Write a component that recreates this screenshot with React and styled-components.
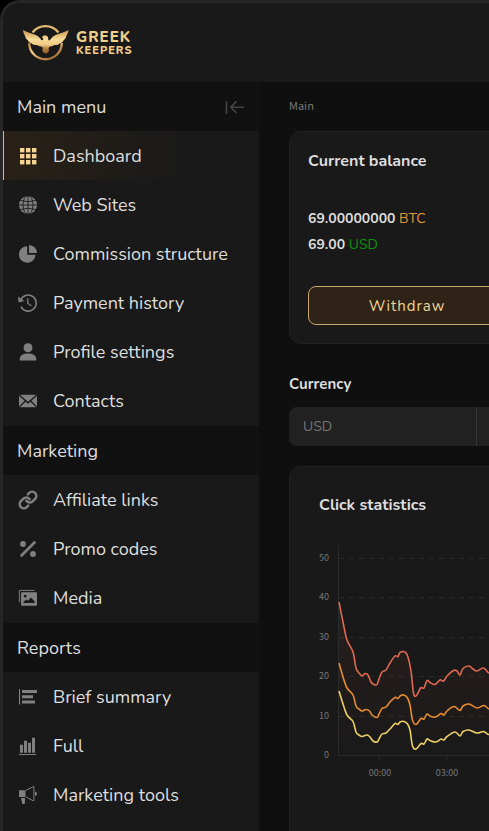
import React from "react";
import styled, { createGlobalStyle } from "styled-components";
import { Link as ChainIcon } from "lucide-react";

const GlobalStyle = createGlobalStyle`
  *, *::before, *::after { box-sizing: border-box; }
  body {
    margin: 0;
    background: #000;
    color: #dedede;
    font-family: Nunito, Lato, "Noto Sans", sans-serif;
    overflow: hidden;
  }
  button, select { font: inherit; color: inherit; }
`;

const labelFont = `"Noto Sans CJK SC", "Noto Sans", sans-serif`;

const Frame = styled.div`
  display: flex;
  flex-direction: column;
  height: 100vh;
  border-top: 3px solid #262626;
  border-left: 3px solid #262626;
  border-top-left-radius: 20px;
  background: #0f0f0f;
  overflow: hidden;
`;

const Header = styled.header`
  display: flex;
  align-items: center;
  flex: none;
  height: 79px;
  padding: 0 19px;
  background: #191919;
`;

const Brand = styled.a`
  display: flex;
  align-items: center;
  gap: 6px;
  color: #f0d08c;
  text-decoration: none;
`;

const BrandText = styled.span`
  display: flex;
  flex-direction: column;
  padding-top: 3px;
  font-weight: 800;
  line-height: 14px;
  letter-spacing: 1px;
`;

const BrandName = styled.span`
  font-size: 15px;
`;

const BrandSub = styled.span`
  font-size: 11px;
`;

const Body = styled.div`
  display: flex;
  flex: 1;
  min-height: 0;
`;

const Sidebar = styled.nav`
  flex: none;
  width: 256px;
  background: #191919;
  overflow: hidden;
`;

const SectionHeading = styled.div`
  display: flex;
  align-items: center;
  justify-content: space-between;
  height: 49px;
  padding: 0 14px;
  background: #111;
`;

const SectionTitle = styled.h2`
  margin: 0;
  font-size: 18px;
  line-height: 24px;
  font-weight: 400;
`;

const CollapseButton = styled.button`
  display: flex;
  padding: 0;
  border: 0;
  background: none;
  color: #444;
`;

const MenuList = styled.ul`
  margin: 0;
  padding: 0 0 1px;
  list-style: none;
`;

const MenuLink = styled.a`
  display: flex;
  align-items: center;
  gap: 15px;
  height: 49px;
  padding-left: 14px;
  border-left: 1px solid ${(p) => (p.$active ? "#dcb873" : "transparent")};
  background: ${(p) => (p.$active ? "linear-gradient(90deg, #292117, #191919 70%)" : "none")};
  color: #dedede;
  font-size: 18px;
  line-height: 24px;
  text-decoration: none;

  svg {
    flex: none;
    width: 20px;
    height: 20px;
    color: ${(p) => (p.$active ? "#f7d491" : "#808080")};
  }
`;

const Main = styled.main`
  flex: 1;
  min-width: 0;
  padding: 0 30px;
  overflow: hidden;
`;

const Content = styled.div`
  display: flex;
  flex-direction: column;
  min-width: 236px;
`;

const Breadcrumb = styled.div`
  height: 49px;
  color: #777;
  font-family: ${labelFont};
  font-size: 11px;
  line-height: 46px;
`;

const Card = styled.section`
  border: 1px solid #222;
  border-radius: 12px;
  background: #191919;
`;

const BalanceCard = styled(Card)`
  display: flex;
  flex-direction: column;
  width: 236px;
  height: 213px;
  padding: 17px 18px 18px;
`;

const Title = styled.h3`
  margin: 0;
  font-size: 16px;
  line-height: 24px;
  font-weight: 700;
`;

const Amounts = styled.div`
  margin-top: 33px;
  font-size: 14px;
  line-height: 26px;
`;

const Amount = styled.div`
  b { font-weight: 700; }
  span { color: ${(p) => p.$tone}; }
`;

const WithdrawButton = styled.button`
  height: 39px;
  margin-top: 28px;
  border: 1px solid #c8a76a;
  border-radius: 8px;
  background: #2f2317;
  color: #f0d394;
  font-size: 15px;
  letter-spacing: 1px;
`;

const FieldLabel = styled.label`
  margin-top: 28px;
  font-size: 15px;
  line-height: 24px;
  font-weight: 700;
`;

const Field = styled.div`
  display: flex;
  height: 39px;
  margin-top: 11px;
  border-radius: 8px;
  background: #212121;
  overflow: hidden;
`;

const CurrencySelect = styled.select`
  appearance: none;
  width: 188px;
  padding: 0 14px;
  border: 0;
  border-right: 1px solid #363636;
  background: transparent;
  color: #747474;
  font-size: 14px;
`;

const StatsCard = styled(Card)`
  margin-top: 20px;
  padding: 26px 29px 80px;
`;

const Chart = styled.svg`
  display: block;
  width: 100%;
  height: 240px;
  margin-top: 23px;
  overflow: visible;

  text {
    fill: #777;
    font-family: ${labelFont};
    font-size: 9px;
  }
`;

const GridIcon = () => (
  <svg viewBox="0 0 20 20" fill="currentColor">
    {[2, 8, 14].map((y) => [2, 8, 14].map((x) => (
      <rect key={`${x}-${y}`} x={x} y={y} width="4.4" height="4.4" />
    )))}
  </svg>
);

const GlobeIcon = () => (
  <svg viewBox="0 0 20 20" fill="none">
    <circle cx="10" cy="10" r="9" fill="currentColor" />
    <g stroke="#191919" strokeWidth="0.9">
      <path d="M10 1v18M1 10h18M2.5 5.5Q10 8 17.5 5.5M2.5 14.5Q10 12 17.5 14.5" />
      <ellipse cx="10" cy="10" rx="5" ry="9.4" />
    </g>
  </svg>
);

const PieIcon = () => (
  <svg viewBox="0 0 20 20" fill="currentColor">
    <path d="M9.2 2.2v8.6h8.3A8.3 8.3 0 1 1 9.2 2.2Z" />
    <path d="M11 .9a8.2 8.2 0 0 1 8 8.1h-8Z" />
  </svg>
);

const HistoryIcon = () => (
  <svg viewBox="0 0 20 20" fill="none" stroke="currentColor">
    <path d="M3.1 6.4A8 8 0 1 1 3 13.6" strokeWidth="1.5" />
    <path d="M0 3.5.6 9.4 6.3 8Z" fill="currentColor" stroke="none" />
    <path d="M9.8 5.4v5.1l3.7 2.2" strokeWidth="1.3" />
  </svg>
);

const PersonIcon = () => (
  <svg viewBox="0 0 20 20" fill="currentColor">
    <circle cx="10" cy="5.8" r="4.5" />
    <path d="M1.8 18.5v-1.7c0-3.5 3.9-5.2 8.2-5.2s8.2 1.7 8.2 5.2v1.7Z" />
  </svg>
);

const MailIcon = () => (
  <svg viewBox="0 0 20 20" fill="currentColor">
    <path d="M1.8 3.7h16.4L10 10.8Z" />
    <path d="M1 4.8 6.6 9.8 1 15.4ZM19 4.8 13.4 9.8 19 15.4Z" />
    <path d="m7.6 10.8 2.4 2 2.4-2 5.8 5.5H1.8Z" />
  </svg>
);

const LinkIcon = () => <ChainIcon strokeWidth={3} />;

const PercentIcon = () => (
  <svg viewBox="0 0 20 20" fill="currentColor">
    <circle cx="5" cy="5" r="2.9" />
    <circle cx="15" cy="15" r="2.9" />
    <path d="M3.5 16.5 16.5 3.5" stroke="currentColor" strokeWidth="2.6" strokeLinecap="round" />
  </svg>
);

const MediaIcon = () => (
  <svg viewBox="0 0 20 20" fill="currentColor">
    <path d="M16.5 2.4H1.4V14" fill="none" stroke="currentColor" strokeWidth="1" />
    <path fillRule="evenodd" d="M4 4.3h14a1 1 0 0 1 1 1v11.4a1 1 0 0 1-1 1H4a1 1 0 0 1-1-1V5.3a1 1 0 0 1 1-1ZM5.5 15h11v-1.8l-3.6-3.7-3 3.2-1.5-1.2-2.9 2.2ZM7.2 6.8a1.4 1.4 0 1 0 0 2.8 1.4 1.4 0 0 0 0-2.8Z" />
  </svg>
);

const SummaryIcon = () => (
  <svg viewBox="0 0 20 20" fill="currentColor">
    <path d="M1 2h1.1v15.5H1ZM4 3h15v3H4ZM4 8.3h11v3H4ZM4 13.5h13v3H4Z" />
  </svg>
);

const BarsIcon = () => (
  <svg viewBox="0 0 20 20" fill="currentColor">
    <path d="M1 18h17v1H1ZM2 8.7h3v8.1H2ZM6 4.7h3v12.1H6ZM10 6.7h3v10.1h-3ZM14 1.7h3v15.1h-3Z" />
  </svg>
);

const MegaphoneIcon = () => (
  <svg viewBox="0 0 20 20" fill="currentColor">
    <path d="M1 5.2h6.5V12H1ZM3 13h4.1l-.3 6H4.3ZM17 6.6c2.6.2 2.6 4.2 0 4.6Z" />
    <path d="M7.8 5.5 15 1.7h.9v14H15L7.8 11.8" fill="none" stroke="currentColor" />
  </svg>
);

const CollapseIcon = () => (
  <svg width="20" height="16" viewBox="0 0 20 16" fill="none" stroke="currentColor" strokeWidth="1.6">
    <path d="M1.5 2v13M19 8.2H6M11.5 2.4 5.8 8.2l5.7 5.8" />
  </svg>
);

const Logo = () => (
  <svg width="48" height="40" viewBox="0 0 48 40">
    <defs>
      <linearGradient id="ring" x1="0" y1="0" x2="1" y2="1">
        <stop offset="0" stopColor="#b5813f" />
        <stop offset=".35" stopColor="#f0cc82" />
        <stop offset=".7" stopColor="#b98344" />
        <stop offset="1" stopColor="#8f6230" />
      </linearGradient>
      <linearGradient id="bird" x1="0" y1="0" x2="0" y2="1">
        <stop offset="0" stopColor="#c9924c" />
        <stop offset=".4" stopColor="#f7dc98" />
        <stop offset=".62" stopColor="#efcb82" />
        <stop offset=".8" stopColor="#b07a3a" />
        <stop offset="1" stopColor="#986022" />
      </linearGradient>
    </defs>
    <path d="M10.600 9.500A16.300 16.300 0 0 1 36.400 9.500" fill="none" stroke="#e3b96f" strokeWidth="2.4" />
    <path d="M7.200 20A16.300 16.300 0 0 0 39.800 20" fill="none" stroke="url(#ring)" strokeWidth="2.4" />
    <path d="M1 7C5 9.6 9.5 10.2 13.2 11.8c3.2 1.3 4.6 3 6.2 5.2.8.5 1.7.1 1.8-.7l-.2-1.4-1-.2c.6-1.8 2.2-2.6 3.8-2.3 2 .4 2.6 2 2.4 3.7 0 1.3.9 1.7 1.8.9 1.6-2.2 3-3.9 6.2-5.2C37.8 10.2 42.5 9.6 46.5 7c-.2 2.3-.9 4-2 5.4-.4 2.2-1.3 3.6-2.7 4.5-.9 1.9-2.2 2.9-3.9 3.3-1.6 1.5-3.3 2-5.1 1.900-1.900 1-3.900 1.500-5.700 1.900l-.5 1.500c-.1.8.3 1.400.6 2-.7 1.600-2 2.800-3.500 3.100-1.500-.3-2.800-1.500-3.500-3.100.3-.6.7-1.200.6-2l-.5-1.500c-1.800-.4-3.800-.9-5.700-1.900-1.800.1-3.500-.4-5.100-1.900-1.700-.4-3-1.400-3.900-3.300-1.400-.9-2.300-2.300-2.700-4.500C1.900 11 1.200 9.300 1 7Z" fill="url(#bird)" />
  </svg>
);

const sections = [
  {
    title: "Main menu",
    collapsible: true,
    items: [
      { label: "Dashboard", icon: GridIcon, active: true },
      { label: "Web Sites", icon: GlobeIcon },
      { label: "Commission structure", icon: PieIcon },
      { label: "Payment history", icon: HistoryIcon },
      { label: "Profile settings", icon: PersonIcon },
      { label: "Contacts", icon: MailIcon },
    ],
  },
  {
    title: "Marketing",
    items: [
      { label: "Affiliate links", icon: LinkIcon },
      { label: "Promo codes", icon: PercentIcon },
      { label: "Media", icon: MediaIcon },
    ],
  },
  {
    title: "Reports",
    items: [
      { label: "Brief summary", icon: SummaryIcon },
      { label: "Full", icon: BarsIcon },
      { label: "Marketing tools", icon: MegaphoneIcon },
    ],
  },
];

// Each point is [distance from the axis, height above the baseline].
const series = [
  {
    color: "#df6951",
    points: [[0,153],[4,133],[8,115],[14,103],[17,87],[20,82],[23,79],[26,81.5],[29,80],[32,73],[35,70.5],[38,70.5],[40,76],[43,83],[47,85],[51,92],[56,99],[59,98.5],[61,102.5],[66,103],[69,98],[72,84],[74.5,62],[77,59],[80,64],[82,67.5],[85,67],[88,74.5],[91,72.5],[96,70.5],[101,75],[104.5,74],[108,79],[114.5,84.5],[118,84],[121,80],[124,86.5],[130,89],[134,86],[138,84],[144.5,87],[150,82],[156,84]],
  },
  {
    color: "#e88b2e",
    points: [[0,92],[4,78],[8,67],[14,60],[17,49],[20,46],[23,44],[27,45.5],[30.5,44],[33,40],[38,37.5],[40,41],[43,46.5],[47,48],[51,53],[56,57.5],[59,56.5],[61,59],[65,60],[68.5,57],[71,50],[73.5,35],[77,30.5],[82,36.5],[85,36],[88,41],[91,39],[96.5,38],[102,41.5],[105,40],[108,44],[115,48.5],[121,44.5],[124,49],[130,51],[138,47],[145,49.5],[150,46],[156,47]],
  },
  {
    color: "#edce64",
    points: [[0,64],[4,51],[8,40],[14,33.5],[17,23],[20,20],[23,18.5],[28,20],[31,18],[34,14],[38,13],[40,16],[43,21],[47,22],[51,26],[56,31.5],[59,30.5],[61,33],[65,33.5],[68.5,31],[71,25],[73.5,9],[77,6],[82,11.5],[85,11],[88,16],[91,14.5],[97,13],[102,16],[105,15],[108,18.5],[116,23],[121,19],[124,23.5],[130,25],[138,22],[144.5,23.5],[150,20.5],[156,22]],
  },
];

const axisX = 20;
const baseY = 215;

function smoothPath(points) {
  const p = points.map(([x, h]) => [axisX + x, baseY - h]);
  let d = `M${p[0][0]} ${p[0][1]}`;
  for (let i = 0; i < p.length - 1; i++) {
    const a = p[i - 1] || p[i];
    const b = p[i];
    const c = p[i + 1];
    const e = p[i + 2] || c;
    d += `C${b[0] + (c[0] - a[0]) / 6} ${b[1] + (c[1] - a[1]) / 6} ${c[0] - (e[0] - b[0]) / 6} ${c[1] - (e[1] - b[1]) / 6} ${c[0]} ${c[1]}`;
  }
  return d;
}

const ClickChart = () => (
  <Chart role="img" aria-label="Click statistics">
    <defs>
      <linearGradient id="fill" x1="0" y1="0" x2="0" y2="1">
        <stop offset="0" stopColor="#df6951" stopOpacity=".08" />
        <stop offset="1" stopColor="#df6951" stopOpacity="0" />
      </linearGradient>
    </defs>
    {[0, 10, 20, 30, 40, 50].map((v, i) => {
      const y = Math.round(baseY - i * 39.4);
      return (
        <g key={v}>
          <text x="10" y={y + 3} textAnchor="end">{v}</text>
          {v > 0 && <line x1={axisX} x2="100%" y1={y + 0.5} y2={y + 0.5} stroke="#292929" strokeDasharray="5 5" />}
        </g>
      );
    })}
    <path d={`M${axisX - 0.5} 5V${baseY + 0.5}`} stroke="#2b2b2b" />
    <line x1={axisX} x2="100%" y1={baseY + 0.5} y2={baseY + 0.5} stroke="#2b2b2b" />
    {["00:00", "03:00"].map((t, i) => (
      <g key={t}>
        <path d={`M${60.5 + i * 67} ${baseY}v5`} stroke="#2b2b2b" />
        <text x={61 + i * 67} y={baseY + 21} textAnchor="middle">{t}</text>
      </g>
    ))}
    <path d={`${smoothPath(series[0].points)}V${baseY}H${axisX}Z`} fill="url(#fill)" />
    {series.map((s) => (
      <path key={s.color} d={smoothPath(s.points)} fill="none" stroke={s.color} strokeWidth="1.6" strokeLinejoin="round" />
    ))}
  </Chart>
);

export default function App() {
  return (
    <>
      <GlobalStyle />
      <Frame>
        <Header>
          <Brand href="#">
            <Logo />
            <BrandText>
              <BrandName>GREEK</BrandName>
              <BrandSub>KEEPERS</BrandSub>
            </BrandText>
          </Brand>
        </Header>
        <Body>
          <Sidebar>
            {sections.map((section) => (
              <section key={section.title}>
                <SectionHeading>
                  <SectionTitle>{section.title}</SectionTitle>
                  {section.collapsible && (
                    <CollapseButton type="button" aria-label="Collapse menu"><CollapseIcon /></CollapseButton>
                  )}
                </SectionHeading>
                <MenuList>
                  {section.items.map(({ label, icon: Icon, active }) => (
                    <li key={label}>
                      <MenuLink href="#" $active={active}><Icon />{label}</MenuLink>
                    </li>
                  ))}
                </MenuList>
              </section>
            ))}
          </Sidebar>
          <Main>
            <Content>
              <Breadcrumb>Main</Breadcrumb>
              <BalanceCard>
                <Title>Current balance</Title>
                <Amounts>
                  <Amount $tone="#e2953c"><b>69.00000000</b> <span>BTC</span></Amount>
                  <Amount $tone="#0b950b"><b>69.00</b> <span>USD</span></Amount>
                </Amounts>
                <WithdrawButton type="button">Withdraw</WithdrawButton>
              </BalanceCard>
              <FieldLabel htmlFor="currency">Currency</FieldLabel>
              <Field>
                <CurrencySelect id="currency" defaultValue="USD">
                  <option>USD</option>
                </CurrencySelect>
              </Field>
              <StatsCard>
                <Title>Click statistics</Title>
                <ClickChart />
              </StatsCard>
            </Content>
          </Main>
        </Body>
      </Frame>
    </>
  );
}
